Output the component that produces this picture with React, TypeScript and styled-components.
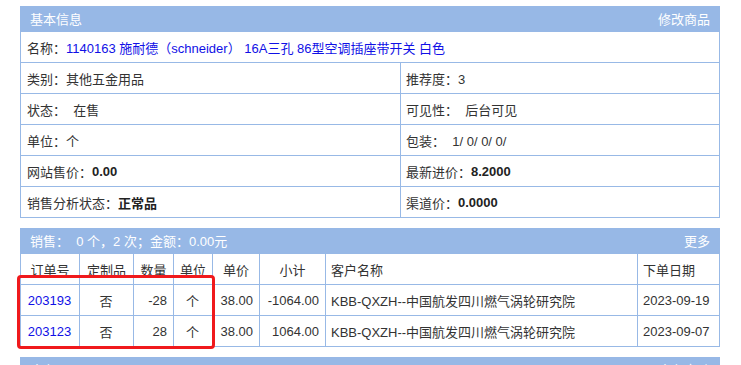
import styled, { createGlobalStyle } from 'styled-components'

const GlobalStyle = createGlobalStyle`
  body {
    margin: 0;
    background: #fff;
    font-family: 'Liberation Sans', 'Noto Sans CJK SC', sans-serif;
    font-size: 13px;
    color: #333;
  }
`

const BORDER = '#98b9e6'

interface Order {
  id: string
  custom: string
  qty: number
  unit: string
  price: string
  total: string
  customer: string
  date: string
}

const orders: Order[] = [
  {
    id: '203193',
    custom: '否',
    qty: -28,
    unit: '个',
    price: '38.00',
    total: '-1064.00',
    customer: 'KBB-QXZH--中国航发四川燃气涡轮研究院',
    date: '2023-09-19',
  },
  {
    id: '203123',
    custom: '否',
    qty: 28,
    unit: '个',
    price: '38.00',
    total: '1064.00',
    customer: 'KBB-QXZH--中国航发四川燃气涡轮研究院',
    date: '2023-09-07',
  },
]

const App = () => {
  return (
    <Page>
      <GlobalStyle />

      {/* 基本信息 */}
      <Panel>
        <PanelHeader>
          <span>基本信息</span>
          <span>修改商品</span>
        </PanelHeader>
        <Row>
          <Cell>
            名称：<LinkText>1140163 施耐德（schneider） 16A三孔 86型空调插座带开关 白色</LinkText>
          </Cell>
        </Row>
        <Row $split>
          <Cell>类别：其他五金用品</Cell>
          <Cell>推荐度：3</Cell>
        </Row>
        <Row $split>
          <Cell>状态：&nbsp; 在售</Cell>
          <Cell>可见性：&nbsp; 后台可见</Cell>
        </Row>
        <Row $split>
          <Cell>单位：个</Cell>
          <Cell>包装：&nbsp; 1/ 0/ 0/ 0/</Cell>
        </Row>
        <Row $split>
          <Cell>
            网站售价：<Strong>0.00</Strong>
          </Cell>
          <Cell>
            最新进价：<Strong>8.2000</Strong>
          </Cell>
        </Row>
        <Row $split>
          <Cell>
            销售分析状态：<Strong>正常品</Strong>
          </Cell>
          <Cell>
            渠道价：<Strong>0.0000</Strong>
          </Cell>
        </Row>
      </Panel>

      {/* 销售 */}
      <Panel>
        <PanelHeader>
          <span>销售：&nbsp; 0 个，2 次；金额：0.00元</span>
          <span>更多</span>
        </PanelHeader>
        <OrderTable>
          <colgroup>
            <col style={{ width: 59 }} />
            <col style={{ width: 54 }} />
            <col style={{ width: 40 }} />
            <col style={{ width: 39 }} />
            <col style={{ width: 47 }} />
            <col style={{ width: 66 }} />
            <col />
            <col style={{ width: 82 }} />
          </colgroup>
          <thead>
            <tr>
              <Th>订单号</Th>
              <Th>定制品</Th>
              <Th>数量</Th>
              <Th>单位</Th>
              <Th>单价</Th>
              <Th>小计</Th>
              <Th $align='left'>客户名称</Th>
              <Th $align='left'>下单日期</Th>
            </tr>
          </thead>
          <tbody>
            {orders.map((o) => (
              <tr key={o.id}>
                <Td>
                  <LinkText>{o.id}</LinkText>
                </Td>
                <Td>{o.custom}</Td>
                <Td $align='right'>{o.qty}</Td>
                <Td>{o.unit}</Td>
                <Td $align='right'>{o.price}</Td>
                <Td $align='right'>{o.total}</Td>
                <Td $align='left'>{o.customer}</Td>
                <Td $align='left'>{o.date}</Td>
              </tr>
            ))}
          </tbody>
        </OrderTable>
        <Highlight />
      </Panel>

      {/* 库存 */}
      <Panel>
        <PanelHeader>
          <span>库存：&nbsp; 30</span>
          <span>库存变动</span>
        </PanelHeader>
      </Panel>
    </Page>
  )
}

export default App

const Page = styled.div`
  padding: 6px 20px 0;
  display: flex;
  flex-direction: column;
  gap: 10px;
`

const Panel = styled.section`
  position: relative;
  width: 700px;
  box-sizing: border-box;
  border: 1px solid ${BORDER};
  border-top: none;
`

const PanelHeader = styled.div`
  height: 26px;
  margin: 0 -1px;
  padding: 0 10px;
  background: #97b8e6;
  color: #fff;
  display: flex;
  align-items: center;
  justify-content: space-between;
  line-height: 1;
`

const Row = styled.div<{ $split?: boolean }>`
  display: grid;
  grid-template-columns: ${(p) => (p.$split ? '379px 1fr' : '1fr')};
  border-top: 1px solid ${BORDER};

  &:nth-child(2) {
    border-top: none;
  }
`

const Cell = styled.div`
  height: 30px;
  display: flex;
  align-items: center;
  padding-left: 6px;
  white-space: nowrap;

  & + & {
    border-left: 1px solid ${BORDER};
    padding-left: 5px;
  }
`

const LinkText = styled.span`
  color: #1010e6;
`

const Strong = styled.b`
  color: #222;
`

const OrderTable = styled.table`
  width: 700px;
  margin: 0 -1px -1px;
  border-collapse: collapse;
  table-layout: fixed;
`

const Th = styled.th<{ $align?: string }>`
  height: 30px;
  padding: 0 5px;
  font-weight: normal;
  text-align: ${(p) => p.$align || 'center'};
  border: 1px solid ${BORDER};
  border-top: none;
  white-space: nowrap;
`

const Td = styled.td<{ $align?: string }>`
  height: 30px;
  padding: 0 6px 0 5px;
  text-align: ${(p) => p.$align || 'center'};
  border: 1px solid ${BORDER};
  white-space: nowrap;
`

const Highlight = styled.div`
  position: absolute;
  left: -4px;
  top: 47px;
  width: 198px;
  height: 74px;
  box-sizing: border-box;
  border: 3px solid #f0191c;
  border-radius: 4px;
  pointer-events: none;
`
